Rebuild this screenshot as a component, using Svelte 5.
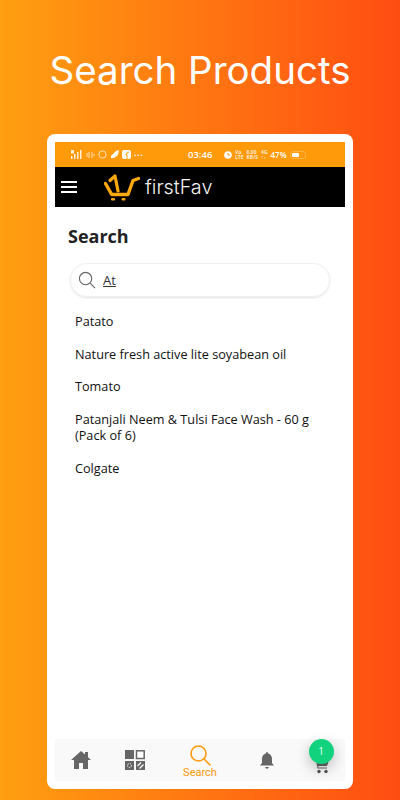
<script lang="ts">
	const results = [
		'Patato',
		'Nature fresh active lite soyabean oil',
		'Tomato',
		'Patanjali Neem & Tulsi Face Wash - 60 g (Pack of 6)',
		'Colgate'
	];
</script>

<div class="page">
	<h1>Search Products</h1>

	<div class="card">
		<div class="phone">
			<div class="status">
				<div class="status-left">
					<svg width="12" height="9" viewBox="0 0 12 9"><path d="M0 9V6h1.500v3zM3 9V4h1.500v5zM0 3.500V0h3v3.500zM6 9V2h1.500v7zM9 9V0h1.500v9z" fill="#fff" opacity=".85" /></svg>
					<svg width="9" height="8" viewBox="0 0 9 8"><path d="M1 2v4M3 1v6M6 1v6M8 3v2" stroke="#fff" stroke-width="1" opacity=".7" /></svg>
					<svg width="9" height="9" viewBox="0 0 9 9"><circle cx="4.500" cy="4.500" r="3.600" fill="none" stroke="#fff" stroke-width="1" opacity=".7" /></svg>
					<svg width="9" height="9" viewBox="0 0 9 9"><path d="M1 6 6 1l3-1-1 5-4 3H1z" fill="#fff" /></svg>
					<svg width="9" height="9" viewBox="0 0 9 9"><rect width="9" height="9" rx="2" fill="#fff" /><path d="M5 9V5H4V4h1V3q0-1 2-1" fill="none" stroke="#ff9a0a" stroke-width="1" /></svg>
					<span class="dots">···</span>
				</div>
				<span class="time">03:46</span>
				<div class="status-right">
					<svg width="8" height="8" viewBox="0 0 8 8"><circle cx="4" cy="4" r="3.800" fill="#fff" /><path d="M4 2v2h2" fill="none" stroke="#ff9a0a" /></svg>
					<span class="tiny">Vo<br />LTE</span>
					<span class="tiny">8.00<br />KB/S</span>
					<span class="tiny">4G<br />↑↓</span>
					<span class="pct">47%</span>
					<span class="battery"><span class="level"></span></span>
				</div>
			</div>

			<header class="appbar">
				<div class="menu"><span></span><span></span><span></span></div>
				<svg class="logo" width="36" height="27" viewBox="0 0 36 27">
					<path d="M1.500 9.500 7.700 20.500H24L29 6.500 34.500 4.500" fill="none" stroke="#f9a80f" stroke-width="3.400" stroke-linecap="round" stroke-linejoin="round" />
					<path d="M6 6.500 11 2 14 17" fill="none" stroke="#f9a80f" stroke-width="3.200" stroke-linecap="round" stroke-linejoin="round" />
					<rect x="7" y="24" width="4" height="2.500" rx="1" fill="#f9a80f" />
					<rect x="17.500" y="24" width="4" height="2.500" rx="1" fill="#f9a80f" />
				</svg>
				<span class="brand">firstFav</span>
			</header>

			<main class="content">
				<h2>Search</h2>
				<div class="searchbox">
					<svg width="18" height="18" viewBox="0 0 19 19" fill="none" stroke="#666" stroke-width="1.200"><circle cx="8" cy="8" r="6.500" /><path d="M12.800 12.800 18 18" /></svg>
					<span class="query">At</span>
				</div>
				<ul class="results">
					{#each results as item}
						<li>{item}</li>
					{/each}
				</ul>
			</main>

			<nav class="tabs">
				<div class="tab">
					<svg width="20" height="18" viewBox="0 0 20 18"><path d="M10 0 0 9h3v9h5v-6h4v6h5V9h3l-3-2.700V1h-3v2.600z" fill="#666" /></svg>
				</div>
				<div class="tab">
					<svg width="20" height="20" viewBox="0 0 20 20">
						<rect width="9" height="9" fill="#666" />
						<rect x="11.500" y=".8" width="7.700" height="7.700" fill="#fff" stroke="#666" stroke-width="1.500" />
						<rect y="11" width="9" height="9" fill="#666" />
						<circle cx="4.500" cy="15.500" r="2" fill="none" stroke="#fff" stroke-dasharray="1.200 1" />
						<rect x="11" y="11" width="9" height="9" fill="#666" />
						<path d="M12.500 16 16 12.500M14.500 18.500 18.500 14.500" stroke="#fff" stroke-width="1.200" />
					</svg>
				</div>
				<div class="tab active">
					<svg width="21" height="21" viewBox="0 0 21 21" fill="none" stroke="#ff9a0a" stroke-width="1.600"><circle cx="8.500" cy="8.500" r="7.500" /><path d="M14 14 20 20" stroke-linecap="round" /></svg>
					<span>Search</span>
				</div>
				<div class="tab">
					<svg width="14" height="17" viewBox="0 0 14 17"><path d="M7 0q1.200 0 1.200 1.500Q12 2.500 12 7v4l2 2.500H0L2 11V7q0-4.500 3.800-5.500Q5.800 0 7 0zM5 15h4q-.5 1.800-2 1.800T5 15z" fill="#666" /></svg>
				</div>
				<div class="tab cart">
					<svg width="15" height="15" viewBox="0 0 15 15"><path d="M0 1h2.500L4 9h9" fill="none" stroke="#666" stroke-width="1.200" /><path d="M3 3h11.500l-1.500 4H4z" fill="#666" /><circle cx="5" cy="12.500" r="1.700" fill="#555" /><circle cx="12" cy="12.500" r="1.700" fill="#555" /></svg>
					<span class="badge">1</span>
				</div>
			</nav>
		</div>
	</div>
</div>

<style>
	:global(body) {
		margin: 0;
		font-family: 'Open Sans', sans-serif;
	}

	.page {
		width: 400px;
		height: 800px;
		box-sizing: border-box;
		padding-top: 43px;
		background: linear-gradient(90deg, #ff9f11, #ff4d12);
		overflow: hidden;
	}

	h1 {
		margin: 0;
		height: 91px;
		color: #fff;
		font-family: 'Inter', sans-serif;
		font-size: 38.500px;
		font-weight: 400;
		line-height: 54px;
		text-align: center;
	}

	.card {
		width: 306px;
		height: 655px;
		box-sizing: border-box;
		margin: 0 auto;
		padding: 8px;
		background: #fff;
		border-radius: 8px;
	}

	.phone {
		height: 100%;
		display: flex;
		flex-direction: column;
	}

	.status {
		height: 25px;
		flex: none;
		display: flex;
		align-items: center;
		padding: 0 17px 0 16px;
		background: #ff9a0a;
		color: #fff;
		font-size: 9px;
	}

	.status-left {
		width: 117px;
		display: flex;
		align-items: center;
		gap: 3px;
	}

	.dots {
		font-size: 9px;
		font-weight: 700;
		letter-spacing: 0.5px;
	}

	.time {
		width: 35px;
		font-size: 9.500px;
		font-weight: 600;
	}

	.status-right {
		display: flex;
		align-items: center;
		gap: 3px;
		margin-left: 1px;
	}

	.tiny {
		font-size: 5px;
		line-height: 4.500px;
		font-weight: 700;
		opacity: 0.8;
	}

	.pct {
		font-size: 8px;
		font-weight: 600;
	}

	.battery {
		width: 16px;
		height: 8px;
		box-sizing: border-box;
		padding: 1px;
		border: 1px solid #ffb347;
		border-radius: 3px;
	}

	.level {
		display: block;
		width: 7px;
		height: 100%;
		background: #fff;
		border-radius: 1px;
	}

	.appbar {
		height: 40px;
		flex: none;
		display: flex;
		align-items: center;
		background: #000;
	}

	.menu {
		width: 16px;
		margin-left: 6px;
		display: flex;
		flex-direction: column;
		gap: 3px;
	}

	.menu span {
		height: 2px;
		background: #fff;
	}

	.logo {
		margin-left: 27px;
	}

	.brand {
		margin-left: 5px;
		color: #f2f2f2;
		font-family: 'Inter', sans-serif;
		font-size: 19.800px;
		font-weight: 300;
	}

	.content {
		flex: 1;
		padding: 0 15px 0 13px;
	}

	h2 {
		margin: 16px 0 0;
		color: #222;
		font-size: 18px;
		font-weight: 700;
		line-height: 26px;
	}

	.searchbox {
		height: 32px;
		margin: 14px 0 0 2px;
		padding-left: 7px;
		display: flex;
		align-items: center;
		gap: 7px;
		border: 1px solid #f0f0f0;
		border-radius: 17px;
		box-shadow: 0 1px 2px rgba(0, 0, 0, 0.12);
	}

	.query {
		color: #333;
		font-size: 13px;
		text-decoration: underline;
	}

	.results {
		list-style: none;
		margin: 8px 0 0;
		padding: 0 0 0 7px;
	}

	.results li {
		padding: 8px 0 8.700px;
		color: #111;
		font-size: 12.700px;
		font-weight: 500;
		line-height: 16px;
	}

	.tabs {
		height: 42px;
		flex: none;
		display: grid;
		grid-template-columns: 52px 56px 74px 60px 48px;
		align-items: center;
		justify-items: center;
		background: #f9f9f9;
	}

	.tab {
		position: relative;
		display: flex;
		flex-direction: column;
		align-items: center;
	}

	.tab.active {
		padding-top: 3px;
		color: #ff9a0a;
		font-family: 'Roboto', sans-serif;
		font-size: 11px;
		line-height: 13px;
	}

	.tab.active svg {
		margin-left: 2px;
	}

	.cart {
		padding-top: 13px;
	}

	.badge {
		position: absolute;
		top: -7px;
		left: -5px;
		width: 25px;
		height: 25px;
		border-radius: 50%;
		background: #12d27e;
		color: #e8fff3;
		font-size: 10px;
		line-height: 25px;
		text-align: center;
		box-shadow: 0 5px 14px rgba(0, 0, 0, 0.25);
	}
</style>
